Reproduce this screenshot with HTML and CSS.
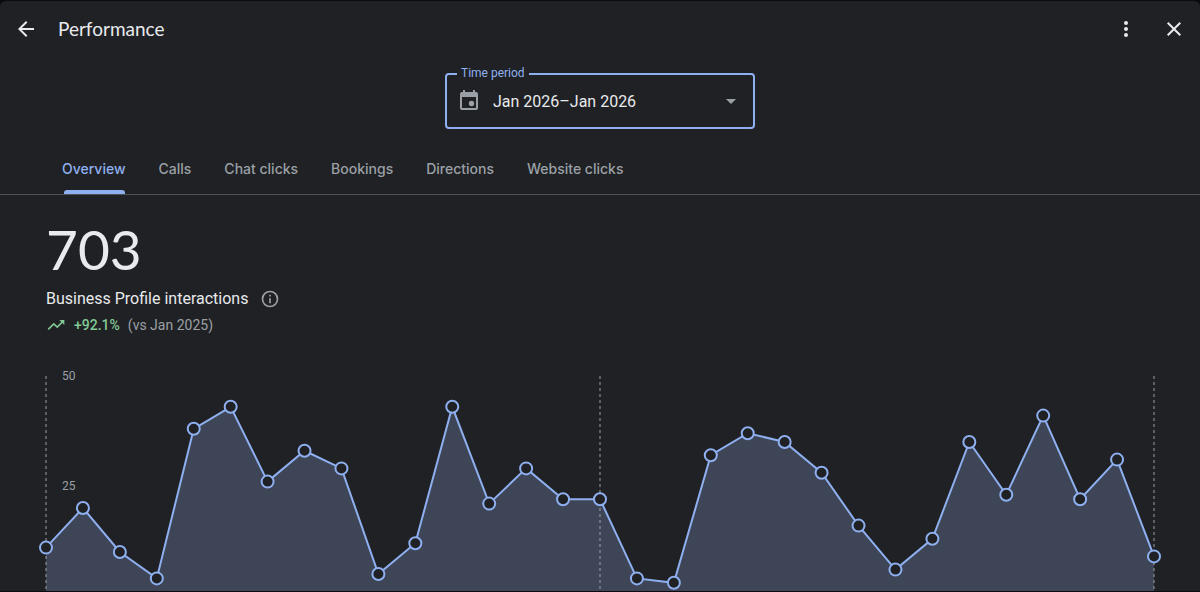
FILE: index.html
```html
<!DOCTYPE html>
<html lang="en">
<head>
  <meta charset="UTF-8">
  <meta name="viewport" content="width=device-width, initial-scale=1.0">
  <title>Performance</title>
  <link rel="stylesheet" href="styles.css">
</head>
<body>
  <main class="panel">
    <header class="topbar">
      <button type="button" class="icon-btn" aria-label="Back">
        <svg viewBox="0 0 24 24"><path d="M20 11H7.83l5.59-5.59L12 4l-8 8 8 8 1.41-1.41L7.83 13H20z"/></svg>
      </button>
      <h1 class="title">Performance</h1>
      <button type="button" class="icon-btn" aria-label="More options">
        <svg viewBox="0 0 24 24"><path d="M12 8a2 2 0 100-4 2 2 0 000 4zm0 2a2 2 0 100 4 2 2 0 000-4zm0 6a2 2 0 100 4 2 2 0 000-4z"/></svg>
      </button>
      <button type="button" class="icon-btn" aria-label="Close">
        <svg viewBox="0 0 24 24"><path d="M19 6.41L17.59 5 12 10.59 6.41 5 5 6.41 10.59 12 5 17.59 6.41 19 12 13.41 17.59 19 19 17.59 13.41 12z"/></svg>
      </button>
    </header>

    <div class="period">
      <label class="period-label" for="period">Time period</label>
      <svg class="period-icon" viewBox="0 0 24 24"><path d="M16 1v2H8V1H6v2H5a2 2 0 00-2 2v14a2 2 0 002 2h14a2 2 0 002-2V5a2 2 0 00-2-2h-1V1zm3 18H5V8h14z"/><circle cx="14.5" cy="14.5" r="2.7"/></svg>
      <select class="period-select" id="period">
        <option>Jan 2026–Jan 2026</option>
      </select>
      <svg class="period-arrow" viewBox="0 0 24 24"><path d="M7 10l5 5 5-5z"/></svg>
    </div>

    <nav class="tabs">
      <a href="#overview" class="tab active">Overview</a>
      <a href="#calls" class="tab">Calls</a>
      <a href="#chat" class="tab">Chat clicks</a>
      <a href="#bookings" class="tab">Bookings</a>
      <a href="#directions" class="tab">Directions</a>
      <a href="#website" class="tab">Website clicks</a>
    </nav>

    <section class="summary" id="overview">
      <div class="total">703</div>
      <div class="metric">
        <span>Business Profile interactions</span>
        <svg class="info" viewBox="0 0 24 24"><path d="M11 7h2v2h-2zm0 4h2v6h-2zm1-9a10 10 0 100 20 10 10 0 000-20zm0 18a8 8 0 110-16 8 8 0 010 16z"/></svg>
      </div>
      <div class="trend">
        <svg class="trend-icon" viewBox="0 0 24 24"><path d="M16 6l2.29 2.29-4.88 4.88-4-4L2 16.59 3.41 18l6-6 4 4 6.3-6.29L22 12V6z"/></svg>
        <span class="trend-up">+92.1%</span>
        <span class="trend-note">(vs Jan 2025)</span>
      </div>
    </section>

    <svg class="chart" id="chart" role="img" aria-label="Daily interactions"></svg>
  </main>
  <script src="chart.js"></script>
</body>
</html>
```

FILE: styles.css
```css
* {
  box-sizing: border-box;
}

body {
  margin: 0;
  background: #0b0a10;
  color: #e8eaed;
  font-family: Roboto, sans-serif;
}

.panel {
  height: calc(100vh - 2px);
  margin: 1px 0;
  overflow: auto;
  scrollbar-width: none;
  background: #202124;
  border-radius: 6px 6px 0 0;
}

.topbar {
  display: flex;
  align-items: center;
  height: 56px;
  padding: 0 6px;
}

.icon-btn {
  width: 40px;
  height: 40px;
  padding: 8px;
  border: 0;
  background: none;
  cursor: pointer;
}

.icon-btn + .icon-btn {
  margin-left: 8px;
}

.icon-btn svg {
  display: block;
  width: 24px;
  height: 24px;
  fill: #e8eaed;
}

.title {
  flex: 1;
  margin: 0 0 0 12px;
  font: 400 19px/24px Lato, sans-serif;
}

.period {
  position: relative;
  display: flex;
  align-items: center;
  width: 310px;
  height: 56px;
  margin: 16px auto 0;
  border: 2px solid #8fb0f0;
  border-radius: 4px;
}

.period-label {
  position: absolute;
  top: -10px;
  left: 10px;
  padding: 0 4px;
  background: #202124;
  color: #8fb0f0;
  font-size: 12px;
  line-height: 16px;
}

.period-icon,
.period-arrow {
  position: absolute;
  width: 24px;
  height: 24px;
  fill: #9aa0a6;
  pointer-events: none;
}

.period-icon {
  left: 10px;
}

.period-arrow {
  right: 10px;
}

.period-select {
  width: 100%;
  height: 100%;
  padding: 2px 40px 0 46px;
  border: 0;
  outline: 0;
  appearance: none;
  background: none;
  color: #e8eaed;
  font: 400 16px/24px Roboto, sans-serif;
}

.tabs {
  display: flex;
  gap: 33px;
  height: 66px;
  padding: 0 62px;
  border-bottom: 1px solid #505155;
}

.tab {
  position: relative;
  padding-top: 30px;
  color: #9aa0a6;
  font: 500 14px/20px Inter, sans-serif;
  text-decoration: none;
}

.tab.active {
  color: #8fb0f0;
}

.tab.active::after {
  content: "";
  position: absolute;
  right: 1px;
  bottom: 0;
  left: 2px;
  height: 4px;
  border-radius: 3px 3px 0 0;
  background: #8fb0f0;
}

.summary {
  padding: 22px 46px 0;
}

.total {
  font: 400 55px/64px Lato, sans-serif;
}

.metric {
  display: flex;
  align-items: center;
  gap: 12px;
  margin-top: 6px;
  font-size: 16px;
  line-height: 24px;
}

.info {
  width: 20px;
  height: 20px;
  fill: #9aa0a6;
}

.trend {
  display: flex;
  align-items: center;
  gap: 8px;
  margin-top: 4px;
  font-size: 14px;
  line-height: 20px;
}

.trend-icon {
  width: 20px;
  height: 20px;
  fill: #81c995;
}

.trend-up {
  color: #81c995;
  font-weight: 500;
}

.trend-note {
  color: #9aa0a6;
}

.chart {
  display: block;
  width: 100%;
  height: 280px;
  margin-top: 24px;
}

.area {
  fill: #3e4557;
}

.line {
  fill: none;
  stroke: #8fb0f0;
  stroke-width: 2;
}

.dot {
  fill: #202124;
  stroke: #8fb0f0;
  stroke-width: 2;
}

.marker {
  stroke: #9aa0a6;
  stroke-dasharray: 3 3;
}

.axis {
  fill: #9aa0a6;
  font-size: 12px;
}
```

FILE: chart.js
```js
const daily = [11, 20, 10, 4, 38, 43, 26, 33, 29, 5, 12, 43, 21, 29, 22, 22,
  4, 3, 32, 37, 35, 28, 16, 6, 13, 35, 23, 41, 22, 31, 9];

const chart = document.getElementById("chart");
const side = 46;
const top50 = 17;
const base = 237;

function drawChart() {
  const width = chart.clientWidth;
  const step = (width - side * 2) / (daily.length - 1);
  const x = (i) => side + i * step;
  const y = (v) => base - v * (base - top50) / 50;
  const points = daily.map((v, i) => `${x(i)},${y(v)}`).join(" ");

  // first, middle and last day
  const markers = [0, 15, 30]
    .map((i) => `<line class="marker" x1="${x(i)}" x2="${x(i)}" y1="${top50}" y2="${base}"/>`)
    .join("");
  const labels = [50, 25]
    .map((v) => `<text class="axis" x="${side + 16}" y="${y(v) + 4}">${v}</text>`)
    .join("");
  const dots = daily
    .map((v, i) => `<circle class="dot" cx="${x(i)}" cy="${y(v)}" r="6"/>`)
    .join("");

  chart.innerHTML = `
    <polygon class="area" points="${side},${base} ${points} ${width - side},${base}"/>
    ${markers}
    <polyline class="line" points="${points}"/>
    ${labels}
    ${dots}
  `;
}

window.addEventListener("resize", drawChart);
drawChart();
```
